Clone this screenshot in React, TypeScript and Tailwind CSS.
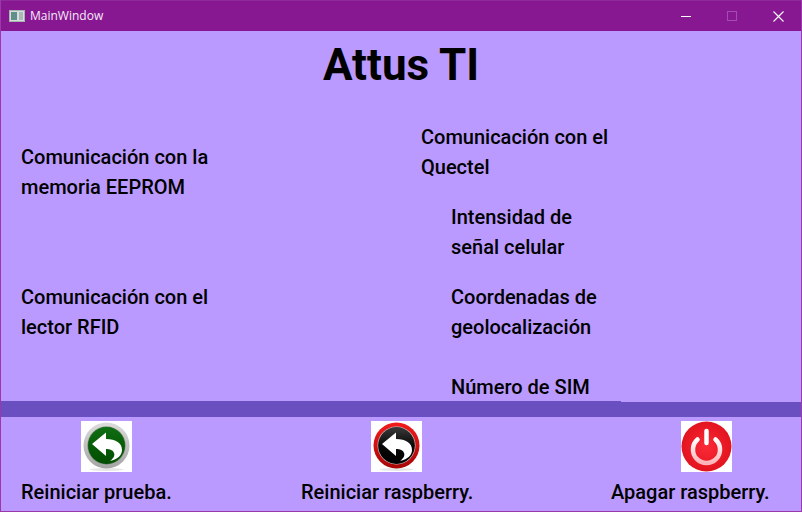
import React from 'react';

const sans = "font-['Roboto',Arial,sans-serif]";

function BackIcon({ id, ring, face, edge }: { id: string; ring: string[]; face: string[]; edge: string }) {
  return (
    <svg width="51" height="51" viewBox="0 0 51 51" className="block bg-white">
      <defs>
        <linearGradient id={`${id}-ring`} x1="0" y1="0" x2="0" y2="1">
          <stop offset="0" stopColor={ring[0]} />
          <stop offset="1" stopColor={ring[1]} />
        </linearGradient>
        <linearGradient id={`${id}-face`} x1="0" y1="0" x2="0" y2="1">
          <stop offset="0" stopColor={face[0]} />
          <stop offset="0.5" stopColor={face[1]} />
          <stop offset="1" stopColor={face[2]} />
        </linearGradient>
      </defs>
      <ellipse cx="25.5" cy="48.5" rx="17" ry="1.5" fill="#e6e6e6" />
      <circle cx="25.5" cy="24.5" r="23" fill={`url(#${id}-ring)`} />
      <circle cx="25.5" cy="24.5" r="19" fill={edge} />
      <circle cx="25.5" cy="24.5" r="18.4" fill={`url(#${id}-face)`} />
      <path d="M11 23 L25 11.5 V18 C35 18 41 22 41 29 C41 34 37 38 29 40 C33 37 34 34 33 32 C32 29 29 28 25 28 V35 Z" fill="#fff" />
    </svg>
  );
}

function PowerIcon() {
  return (
    <svg width="51" height="51" viewBox="0 0 51 51" className="block bg-white">
      <defs>
        <radialGradient id="power-face" cx="0.5" cy="0.5" r="0.5">
          <stop offset="0" stopColor="#fb2a38" />
          <stop offset="1" stopColor="#e2141f" />
        </radialGradient>
        <linearGradient id="power-ring" x1="0" y1="0" x2="0" y2="1">
          <stop offset="0" stopColor="#ffffff" />
          <stop offset="1" stopColor="#ffb4b8" />
        </linearGradient>
      </defs>
      <circle cx="25.5" cy="25.5" r="25" fill="url(#power-face)" />
      <path d="M16.5 18.5 A13.5 13.5 0 1 0 34.5 18.5" fill="none" stroke="url(#power-ring)" strokeWidth="4.5" strokeLinecap="round" />
      <path d="M25.5 10 V22" stroke="#fff" strokeWidth="4.5" strokeLinecap="round" />
    </svg>
  );
}

function Label({ lines, className }: { lines: string[]; className?: string }) {
  return (
    <div className={`text-[20px] leading-[30px] text-black font-medium ${className ?? ''}`}>
      {lines.map((l) => (
        <div key={l} className="whitespace-nowrap">{l}</div>
      ))}
    </div>
  );
}

export default function App() {
  return (
    <div className={`w-[802px] h-[512px] flex flex-col border border-t-0 border-[#9b39ab] bg-[#bb9aff] overflow-hidden ${sans}`}>
      {/* Title bar */}
      <div className="h-[31px] shrink-0 -mx-px flex items-center bg-[#871892] border-t border-[#8f2a9b] text-white">
        <svg width="16" height="16" viewBox="0 0 16 16" className="ml-[9px]">
          <rect x="0.5" y="2.5" width="15" height="11" fill="#d8dfdf" stroke="#a8b2b0" />
          <rect x="2" y="4" width="6" height="8" fill="#5f8f88" />
          <rect x="10" y="4" width="4" height="8" fill="#aab8b8" />
        </svg>
        <span className="ml-[5px] text-xs font-['Open_Sans',sans-serif] text-[#f6e8f8]">MainWindow</span>
        <div className="ml-auto flex items-center pr-px">
          <div className="w-[46px] h-[30px] flex items-center justify-center">
            <div className="w-[10px] h-px bg-white" />
          </div>
          <div className="w-[46px] h-[30px] flex items-center justify-center">
            <div className="w-[10px] h-[10px] border border-[#a64bb3]" />
          </div>
          <div className="w-[46px] h-[30px] flex items-center justify-center">
            <svg width="11" height="11" viewBox="0 0 11 11">
              <path d="M0.5 0.5 L10.5 10.5 M10.5 0.5 L0.5 10.5" stroke="#fff" strokeWidth="1.1" />
            </svg>
          </div>
        </div>
      </div>

      {/* Heading and test labels */}
      <div className="h-[370px] shrink-0 pt-[7px]">
        <h1 className="text-center text-[44px] leading-[54px] font-bold text-black">Attus TI</h1>
        <div className="flex pl-5 mt-[30px]">
          <div className="w-[400px] pt-[20px]">
            <Label lines={['Comunicación con la', 'memoria EEPROM']} />
            <Label lines={['Comunicación con el', 'lector RFID']} className="mt-[80px]" />
          </div>
          <div>
            <Label lines={['Comunicación con el', 'Quectel']} />
            <div className="pl-[30px]">
              <Label lines={['Intensidad de', 'señal celular']} className="mt-5" />
              <Label lines={['Coordenadas de', 'geolocalización']} className="mt-5" />
              <Label lines={['Número de SIM']} className="mt-[30px]" />
            </div>
          </div>
        </div>
      </div>

      {/* Divider: its top pixel row stops under the last label */}
      <div className="h-4 shrink-0 flex flex-col">
        <div className="h-px w-[620px] bg-[#6a4fc0]" />
        <div className="flex-1 bg-[#6a4fc0]" />
      </div>

      {/* Actions */}
      <div className="flex pl-5 pt-1">
        <div className="w-[280px]">
          <div className="ml-[60px]"><BackIcon id="green" ring={['#dcdcdc', '#a4a4a4']} face={['#0f6e12', '#065c07', '#034e03']} edge="#5f7f5f" /></div>
          <Label lines={['Reiniciar prueba.']} className="mt-[5px]" />
        </div>
        <div className="w-[310px]">
          <div className="ml-[70px]"><BackIcon id="black" ring={['#f41c1c', '#a80606']} face={['#3a3a3a', '#080808', '#000000']} edge="#c8c8c8" /></div>
          <Label lines={['Reiniciar raspberry.']} className="mt-[5px]" />
        </div>
        <div>
          <div className="ml-[70px]"><PowerIcon /></div>
          <Label lines={['Apagar raspberry.']} className="mt-[5px]" />
        </div>
      </div>
    </div>
  );
}
